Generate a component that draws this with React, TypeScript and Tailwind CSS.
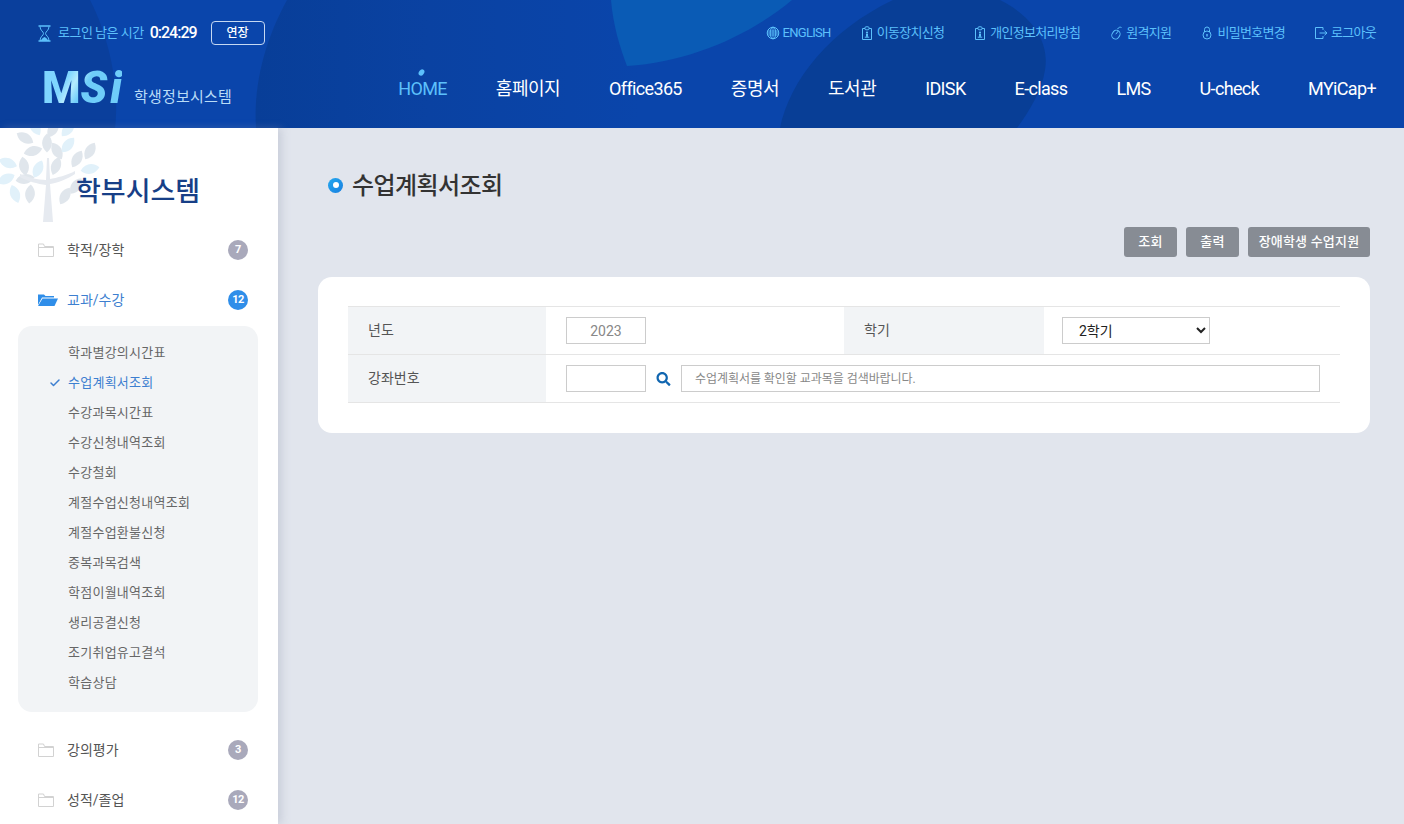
import { Check } from "lucide-react";
import { FaSearch } from "react-icons/fa";

const topLinks = [
  { label: "ENGLISH", icon: "globe" },
  { label: "이동장치신청", icon: "id" },
  { label: "개인정보처리방침", icon: "id" },
  { label: "원격지원", icon: "mouse" },
  { label: "비밀번호변경", icon: "lock" },
  { label: "로그아웃", icon: "logout" },
];

const navItems = [
  { label: "HOME", latin: true },
  { label: "홈페이지", latin: false },
  { label: "Office365", latin: true },
  { label: "증명서", latin: false },
  { label: "도서관", latin: false },
  { label: "IDISK", latin: true },
  { label: "E-class", latin: true },
  { label: "LMS", latin: true },
  { label: "U-check", latin: true },
  { label: "MYiCap+", latin: true },
];

const subMenu = [
  "학과별강의시간표",
  "수업계획서조회",
  "수강과목시간표",
  "수강신청내역조회",
  "수강철회",
  "계절수업신청내역조회",
  "계절수업환불신청",
  "중복과목검색",
  "학점이월내역조회",
  "생리공결신청",
  "조기취업유고결석",
  "학습상담",
];

const buttons = [
  { label: "조회", width: "w-[53px]" },
  { label: "출력", width: "w-[53px]" },
  { label: "장애학생 수업지원", width: "w-[122px]" },
];

function TopIcon({ name }: { name: string }) {
  const common = { fill: "none", stroke: "#5cc0fb", strokeWidth: 1 };
  return (
    <svg width="14" height="14" viewBox="0 0 14 14" className="shrink-0">
      {name === "globe" && (
        <g {...common}>
          <circle cx="7" cy="7" r="5.800" />
          <ellipse cx="7" cy="7" rx="2.800" ry="5.800" />
          <path d="M1.500 5h11M1.500 9h11M7 1.200v11.600M1.200 7h11.600" strokeWidth="0.8" />
        </g>
      )}
      {name === "id" && (
        <g {...common}>
          <path d="M5 2.500H2.500v11h9v-11H9" />
          <rect x="5" y="0.800" width="4" height="3" rx="1" />
          <circle cx="7" cy="6.500" r="1.100" fill="#5cc0fb" stroke="none" />
          <path d="M6.500 8h1v2.500h-1zM4.800 11.200h4.400" fill="#5cc0fb" strokeWidth="1" />
        </g>
      )}
      {name === "mouse" && (
        <g {...common}>
          <rect x="3.200" y="4.200" width="7.400" height="9" rx="3.700" transform="rotate(35 7 8.700)" />
          <path d="M9.300 5 6.800 8.200M12.500 1.500C11 .8 9.500 1.200 8.500 3.200" />
        </g>
      )}
      {name === "lock" && (
        <g {...common}>
          <circle cx="7" cy="9" r="4" />
          <path d="M4.500 6V3.500a2.500 2.500 0 0 1 5 0V6" />
          <path d="M7 8v2.500" strokeWidth="1.400" />
        </g>
      )}
      {name === "logout" && (
        <g {...common}>
          <path d="M9 4V1.500H1.500v11H9V10M5.500 7H13M10.500 4.800 13 7l-2.500 2.200" />
        </g>
      )}
    </svg>
  );
}

function Hourglass() {
  return (
    <svg width="13" height="17" viewBox="0 0 13 17" className="shrink-0">
      <path d="M.5 1h12M.5 16h12" stroke="#5cc0fb" strokeWidth="1.400" />
      <path d="M2 1.500c0 4 3.500 5 3.500 7S2 11.500 2 15.500h9c0-4-3.500-5-3.500-7S11 5.500 11 1.500" fill="none" stroke="#5cc0fb" />
      <path d="M3 15.500c.5-2 2.500-3 3.500-3.500 1 .5 3 1.500 3.500 3.500z" fill="#5cc0fb" />
    </svg>
  );
}

function Folder({ open }: { open?: boolean }) {
  if (open) {
    return (
      <svg width="20" height="14" viewBox="0 0 20 14" className="shrink-0">
        <path d="M0 1.500h6l1.500 1.500H16v1.500H4L0 12z" fill="#2f8ee9" />
        <path d="M4.500 5.500H20L16.500 13H0z" fill="#2f8ee9" />
      </svg>
    );
  }
  return (
    <svg width="16" height="14" viewBox="0 0 16 14" className="shrink-0">
      <path d="M.5 2V13.500h15V3.500H6.500L5.500 1H.5zM.5 4.500h15" fill="none" stroke="#d2d2d2" />
    </svg>
  );
}

function TreeMark() {
  // x, y, rotation, light-blue or grey
  const leaves: [number, number, number, boolean][] = [
    [35, -1, 150, true],
    [53, 1, 30, false],
    [68, 1, 40, true],
    [25, 10, 120, false],
    [47, 15, 0, false],
    [33, 23, 75, false],
    [57, 23, 150, false],
    [68, 17, 40, true],
    [90, 23, 30, false],
    [77, 31, 30, false],
    [90, 41, 80, true],
    [8, 35, 110, true],
    [24, 38, 170, false],
    [38, 41, 25, true],
    [56, 38, 20, false],
    [6, 51, 65, true],
    [25, 51, 80, false],
    [76, 58, 35, false],
    [15, 66, 160, true],
    [30, 66, 5, false],
    [65, 68, 30, false],
  ];
  return (
    <svg width="102" height="96" viewBox="0 0 102 96" className="absolute top-0 left-0">
      {leaves.map(([x, y, r, light], i) => (
        <path
          key={i}
          d="M0 -9.500C6.500 -4 6.500 4 0 9.500C-6.500 4 -6.500 -4 0 -9.500z"
          transform={`translate(${x} ${y}) rotate(${r})`}
          fill={light ? "#e1f1fa" : "#e0e6ec"}
        />
      ))}
      <path d="M47 30h2l1 21c6-1 18-4 25-8v3c-7 5-18 9-25 10l3 38H43l3-37c-8-1-19-4-26-8v-3c8 3 18 6 26 6z" fill="#e6eaf0" />
    </svg>
  );
}

function Header() {
  return (
    <header className="relative h-[128px] overflow-hidden bg-[#0a45ab]">
      <svg width="1404" height="128" viewBox="0 0 1404 128" className="absolute inset-0">
        <defs>
          <linearGradient id="blob" x1="0" x2="1" y1="0" y2="0">
            <stop offset="0" stopColor="#083e98" />
            <stop offset="0.45" stopColor="#0a42a2" />
            <stop offset="1" stopColor="#0a45ab" />
          </linearGradient>
        </defs>
        <path d="M0 0H90C108 35 120 85 115 128H0z" fill="#0a3f9c" />
        <path d="M287 0C265 40 253 85 256 128H640V0z" fill="url(#blob)" />
        <path d="M611 0C613 25 620 48 627 66C690 62 750 35 792 0z" fill="#0a5bb5" />
        <path d="M780 128C790 80 830 30 893 0H1000C1030 15 1050 40 1045 70C1042 90 1030 110 1017 128z" fill="#083e96" />
      </svg>
      <div className="relative flex h-full flex-col px-[28px]">
        <div className="flex h-[66px] items-center justify-between">
          <div className="ml-[10px] flex items-center">
            <Hourglass />
            <span className="ml-[7px] text-[13px] tracking-[-0.5px] text-[#5cc0fb]">로그인 남은 시간</span>
            <span className="ml-[6px] text-[16px] font-medium tracking-[-1px] text-white">0:24:29</span>
            <button className="ml-[14px] h-[24px] w-[54px] rounded-[4px] border border-[#c5d8f2] text-[12px] font-medium text-white">
              연장
            </button>
          </div>
          <ul className="flex items-center gap-[29px]">
            {topLinks.map((link) => (
              <li key={link.label} className="flex items-center gap-[3px] text-[13px] tracking-[-0.7px] text-[#5cc0fb]">
                <TopIcon name={link.icon} />
                <span>{link.label}</span>
              </li>
            ))}
          </ul>
        </div>
        <div className="flex items-center justify-between">
          <div className="ml-[14px] flex items-end">
            <span className="bg-[linear-gradient(120deg,#7fd6ff_0%,#7fd6ff_30%,#b5ebff_40%,#6fcdf9_52%,#6fcdf9_100%)] bg-clip-text text-[44px] leading-[44px] font-black text-transparent">
              M<span className="mr-[3px] italic">S</span>
              <span className="italic">i</span>
            </span>
            <span className="mb-[2px] ml-[12px] text-[15px] tracking-[0.2px] text-[#b9dcf7]">학생정보시스템</span>
          </div>
          <nav className="flex items-center gap-[49px]">
            {navItems.map((item, i) => (
              <a
                key={item.label}
                className={`relative text-[18px] ${item.latin ? "tracking-[-0.65px]" : "tracking-[-0.5px]"} ${
                  i === 0 ? "text-[#5cc0fb]" : "text-white"
                }`}
              >
                {i === 0 && (
                  <span className="absolute top-[-6px] left-[21px] h-[7px] w-[5px] rotate-[35deg] rounded-[50%] bg-[#5cc0fb]" />
                )}
                {item.label}
              </a>
            ))}
          </nav>
        </div>
      </div>
    </header>
  );
}

function MenuRow({ label, count, open }: { label: string; count: number; open?: boolean }) {
  return (
    <div className="flex h-[50px] items-center pr-[30px] pl-[38px]">
      <div className="flex w-[29px] items-center">
        <Folder open={open} />
      </div>
      <span className={open ? "flex-1 text-[14px] text-[#3d7fd0]" : "flex-1 text-[14px] text-[#555555]"}>{label}</span>
      <span
        className={
          open
            ? "flex h-[20px] w-[20px] items-center justify-center rounded-full bg-[#2f8ee9] text-[11px] font-bold tracking-[-0.5px] text-white"
            : "flex h-[20px] w-[20px] items-center justify-center rounded-full bg-[#a9a9bb] text-[11px] font-bold tracking-[-0.5px] text-white"
        }
      >
        {count}
      </span>
    </div>
  );
}

function Sidebar() {
  return (
    <aside className="relative h-[696px] w-[278px] shrink-0 overflow-hidden bg-white shadow-[4px_0_8px_rgba(150,155,175,0.3)]">
      <TreeMark />
      <h2 className="relative pt-[45px] pl-[76px] text-[27px] leading-[38px] font-medium text-[#173f87]">
        학부시스템
      </h2>
      <div className="pt-[14px]">
        <MenuRow label="학적/장학" count={7} />
        <MenuRow label="교과/수강" count={12} open />
        <div className="mt-[1px] mr-[20px] mb-[13px] ml-[18px] rounded-[14px] bg-[#f2f4f6] pt-[12px] pb-[14px]">
          {subMenu.map((item, i) => (
            <div key={item} className="relative flex h-[30px] items-center pl-[50px] text-[13px] tracking-[0.25px]">
              {i === 1 && <Check size={12} strokeWidth={3} className="absolute left-[31px] text-[#3d7fd0]" />}
              <span className={i === 1 ? "text-[#3d7fd0]" : "text-[#666666]"}>{item}</span>
            </div>
          ))}
        </div>
        <MenuRow label="강의평가" count={3} />
        <MenuRow label="성적/졸업" count={12} />
      </div>
    </aside>
  );
}

function Main() {
  const th = "flex h-[47px] items-center bg-[#f2f4f6] pl-[20px] text-[14px] text-[#555555]";
  const input = "h-[27px] border border-[#cccccc] bg-white outline-none";
  return (
    <main className="flex-1 pt-[40px] pr-[34px] pl-[40px]">
      <div className="flex items-center pl-[10px]">
        <span className="mb-[2px] flex h-[15px] w-[15px] items-center justify-center rounded-full bg-gradient-to-br from-[#25a8ee] to-[#1a7fe0]">
          <span className="h-[6px] w-[6px] rounded-full bg-white" />
        </span>
        <h1 className="ml-[9px] text-[24px] leading-[36px] font-medium tracking-[-0.6px] text-[#333333]">수업계획서조회</h1>
      </div>
      <div className="mt-[23px] flex justify-end gap-[9px]">
        {buttons.map((b) => (
          <button
            key={b.label}
            className={`h-[30px] rounded-[3px] bg-[#878c94] text-[13px] font-medium tracking-[0.2px] text-white ${b.width}`}
          >
            {b.label}
          </button>
        ))}
      </div>
      <section className="mt-[20px] rounded-[14px] bg-white px-[30px] pt-[29px] pb-[30px]">
        <div className="border-t border-[#e5e5e5]">
          <div className="grid grid-cols-[198px_298px_200px_1fr] border-b border-[#e5e5e5]">
            <div className={th}>년도</div>
            <div className="flex items-center pl-[20px]">
              <input readOnly value="2023" className={`${input} w-[80px] text-center text-[14px] text-[#888888]`} />
            </div>
            <div className={th}>학기</div>
            <div className="flex items-center pl-[18px]">
              <select defaultValue="2" className={`${input} w-[148px] pl-[12px] text-[14px] text-[#222222]`}>
                <option value="1">1학기</option>
                <option value="2">2학기</option>
              </select>
            </div>
          </div>
          <div className="grid grid-cols-[198px_1fr] border-b border-[#e5e5e5]">
            <div className={th}>강좌번호</div>
            <div className="flex items-center pr-[20px] pl-[20px]">
              <input className={`${input} w-[80px]`} />
              <FaSearch size={14} className="mx-[10px] w-[15px] shrink-0 text-[#1166b0]" />
              <input
                readOnly
                placeholder="수업계획서를 확인할 교과목을 검색바랍니다."
                className={`${input} flex-1 pl-[13px] text-[12px] tracking-[-0.05px] placeholder:text-[#888888]`}
              />
            </div>
          </div>
        </div>
      </section>
    </main>
  );
}

export default function App() {
  return (
    <div className="h-[824px] w-[1404px] overflow-hidden bg-[#e1e5ed] font-['Roboto','Noto_Sans_CJK_KR',sans-serif]">
      <Header />
      <div className="flex">
        <Sidebar />
        <Main />
      </div>
    </div>
  );
}
